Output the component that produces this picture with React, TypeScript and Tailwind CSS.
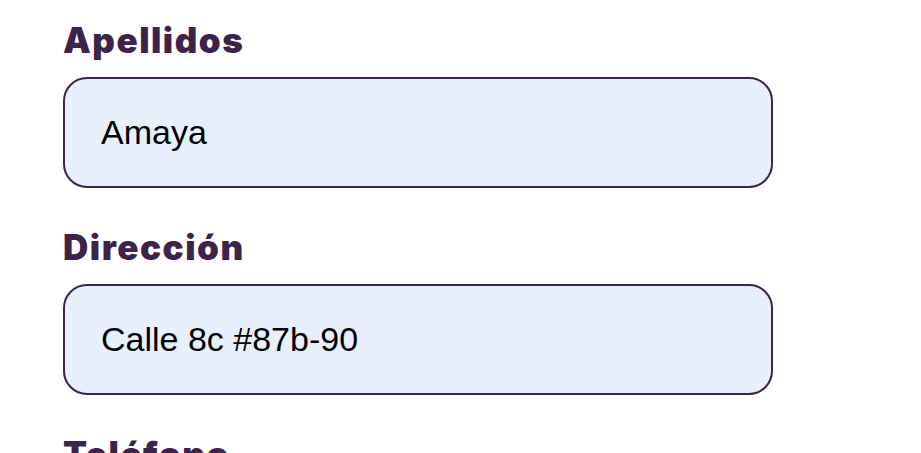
const fields = [
  { label: "Apellidos", value: "Amaya" },
  { label: "Dirección", value: "Calle 8c #87b-90" },
  { label: "Teléfono", value: "3001234567" },
];

export default function App() {
  return (
    <div className="min-h-screen bg-white pl-[63px] pt-[20px]">
      <form className="flex flex-col gap-[39px]">
        {fields.map((f) => (
          <div key={f.label} className="flex flex-col">
            <label className="mb-[17px] font-['Inter',sans-serif] text-[35px] font-black leading-[40px] tracking-[1.5px] text-[#3d2349]">
              {f.label}
            </label>
            <input
              defaultValue={f.value}
              className="h-[111px] w-[710px] rounded-[24px] border-2 border-[#3d2349] bg-[#e8f0fe] px-[36px] font-['Liberation_Sans',Arial,sans-serif] text-[34px] text-black outline-none"
            />
          </div>
        ))}
      </form>
    </div>
  );
}
